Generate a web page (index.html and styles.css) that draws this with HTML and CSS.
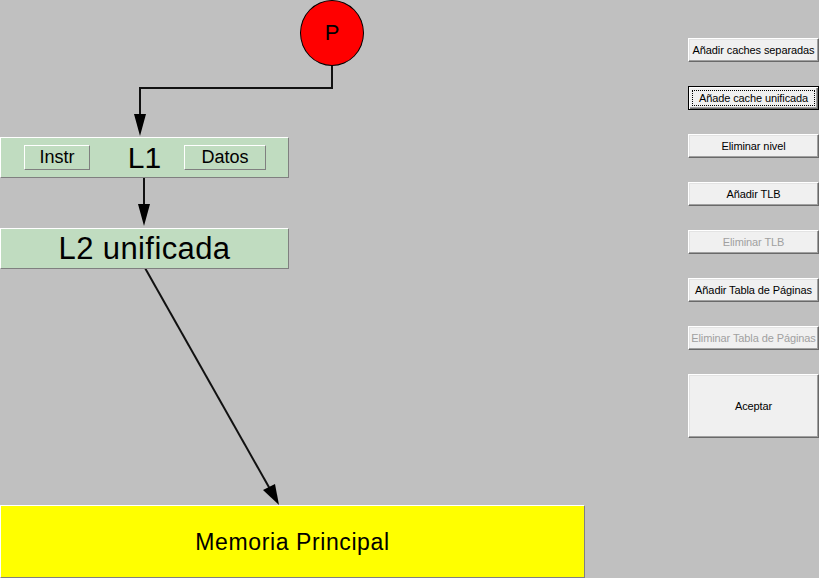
FILE: index.html
```html
<!doctype html>
<html>
<head>
<meta charset="utf-8"/>
<title>Jerarquía de memoria</title>
<link rel="stylesheet" href="styles.css">
</head>
<body>
<div class="screen">
	<div class="diagram">
		<svg class="wires" width="688" height="578" viewBox="0 0 688 578">
			<polyline points="332,65 332,88 140,88 140,116" fill="none" stroke="#111" stroke-width="2"/>
			<polygon points="134,114 146,114 140,136" fill="#000"/>
			<line x1="144" y1="177" x2="144" y2="206" stroke="#111" stroke-width="2"/>
			<polygon points="138,204 150,204 144,226" fill="#000"/>
			<line x1="145" y1="268" x2="270" y2="489" stroke="#111" stroke-width="2"/>
			<polygon points="263,490 275,484 279,505" fill="#000"/>
		</svg>
		<div class="cpu">P</div>
		<div class="cache l1">
			<span class="part instr">Instr</span>
			<span class="title">L1</span>
			<span class="part datos">Datos</span>
		</div>
		<div class="cache l2"><span class="title">L2 unificada</span></div>
		<div class="memory">Memoria Principal</div>
	</div>
	<div class="actions">
		<button class="btn">Añadir caches separadas</button>
		<button class="btn focused">Añade cache unificada</button>
		<button class="btn">Eliminar nivel</button>
		<button class="btn">Añadir TLB</button>
		<button class="btn" disabled>Eliminar TLB</button>
		<button class="btn">Añadir Tabla de Páginas</button>
		<button class="btn" disabled>Eliminar Tabla de Páginas</button>
		<button class="btn big">Aceptar</button>
	</div>
</div>
</body>
</html>
```
FILE: styles.css
```css
html, body {
	margin: 0;
	padding: 0;
	background: #c0c0c0;
}
.screen {
	display: flex;
	width: 819px;
	height: 578px;
	overflow: hidden;
	font-family: "Liberation Sans", Arial, sans-serif;
}
.diagram {
	position: relative;
	width: 688px;
	height: 578px;
	flex: none;
}
.wires {
	position: absolute;
	left: 0;
	top: 0;
}
.cpu {
	position: absolute;
	left: 300px;
	top: 0;
	width: 62px;
	height: 64px;
	border: 1px solid #000;
	border-radius: 50%;
	background: #ff0000;
	display: flex;
	align-items: center;
	justify-content: center;
	font-size: 22px;
	color: #000;
}
.cache {
	position: absolute;
	left: 0;
	width: 289px;
	height: 41px;
	box-sizing: border-box;
	background: #c0dcc0;
	border: 1px solid;
	border-color: #fff #808080 #808080 #fff;
	display: flex;
	align-items: center;
	justify-content: center;
}
.l1 {
	top: 137px;
}
.l2 {
	top: 228px;
}
.title {
	color: #000;
}
.l1 .title {
	font-size: 30px;
}
.l2 .title {
	font-size: 31px;
	letter-spacing: 0.4px;
}
.part {
	position: absolute;
	top: 7px;
	height: 25px;
	box-sizing: border-box;
	border: 1px solid;
	border-color: #fff #808080 #808080 #fff;
	display: flex;
	align-items: center;
	justify-content: center;
	font-size: 18px;
	color: #000;
}
.instr {
	left: 23px;
	width: 66px;
}
.datos {
	left: 183px;
	width: 82px;
}
.memory {
	position: absolute;
	left: 0;
	top: 505px;
	width: 585px;
	height: 73px;
	box-sizing: border-box;
	background: #ffff00;
	border: 1px solid;
	border-color: #fff #808080 #808080 #fff;
	display: flex;
	align-items: center;
	justify-content: center;
	font-size: 23px;
	letter-spacing: 0.6px;
	padding-top: 2px;
	color: #000;
}
.actions {
	display: flex;
	flex-direction: column;
	gap: 24px;
	padding-top: 38px;
	width: 131px;
	flex: none;
}
.btn {
	position: relative;
	height: 24px;
	width: 131px;
	margin: 0;
	padding: 0;
	box-sizing: border-box;
	background: #f0f0f0;
	border: 1px solid;
	border-color: #fff #696969 #696969 #fff;
	box-shadow: inset -1px -1px #a0a0a0, inset 1px 1px #e3e3e3;
	font-family: "Liberation Sans", Arial, sans-serif;
	font-size: 11px;
	color: #000;
	white-space: nowrap;
	letter-spacing: -0.1px;
}
.btn:disabled {
	color: #a0a0a0;
}
.focused {
	border-color: #000;
	box-shadow: inset 1px 1px #fff, inset -1px -1px #696969, inset -2px -2px #a0a0a0;
}
.focused::after {
	content: "";
	position: absolute;
	left: 3px;
	top: 3px;
	right: 3px;
	bottom: 3px;
	border: 1px dotted #000;
}
.big {
	height: 64px;
}
```
